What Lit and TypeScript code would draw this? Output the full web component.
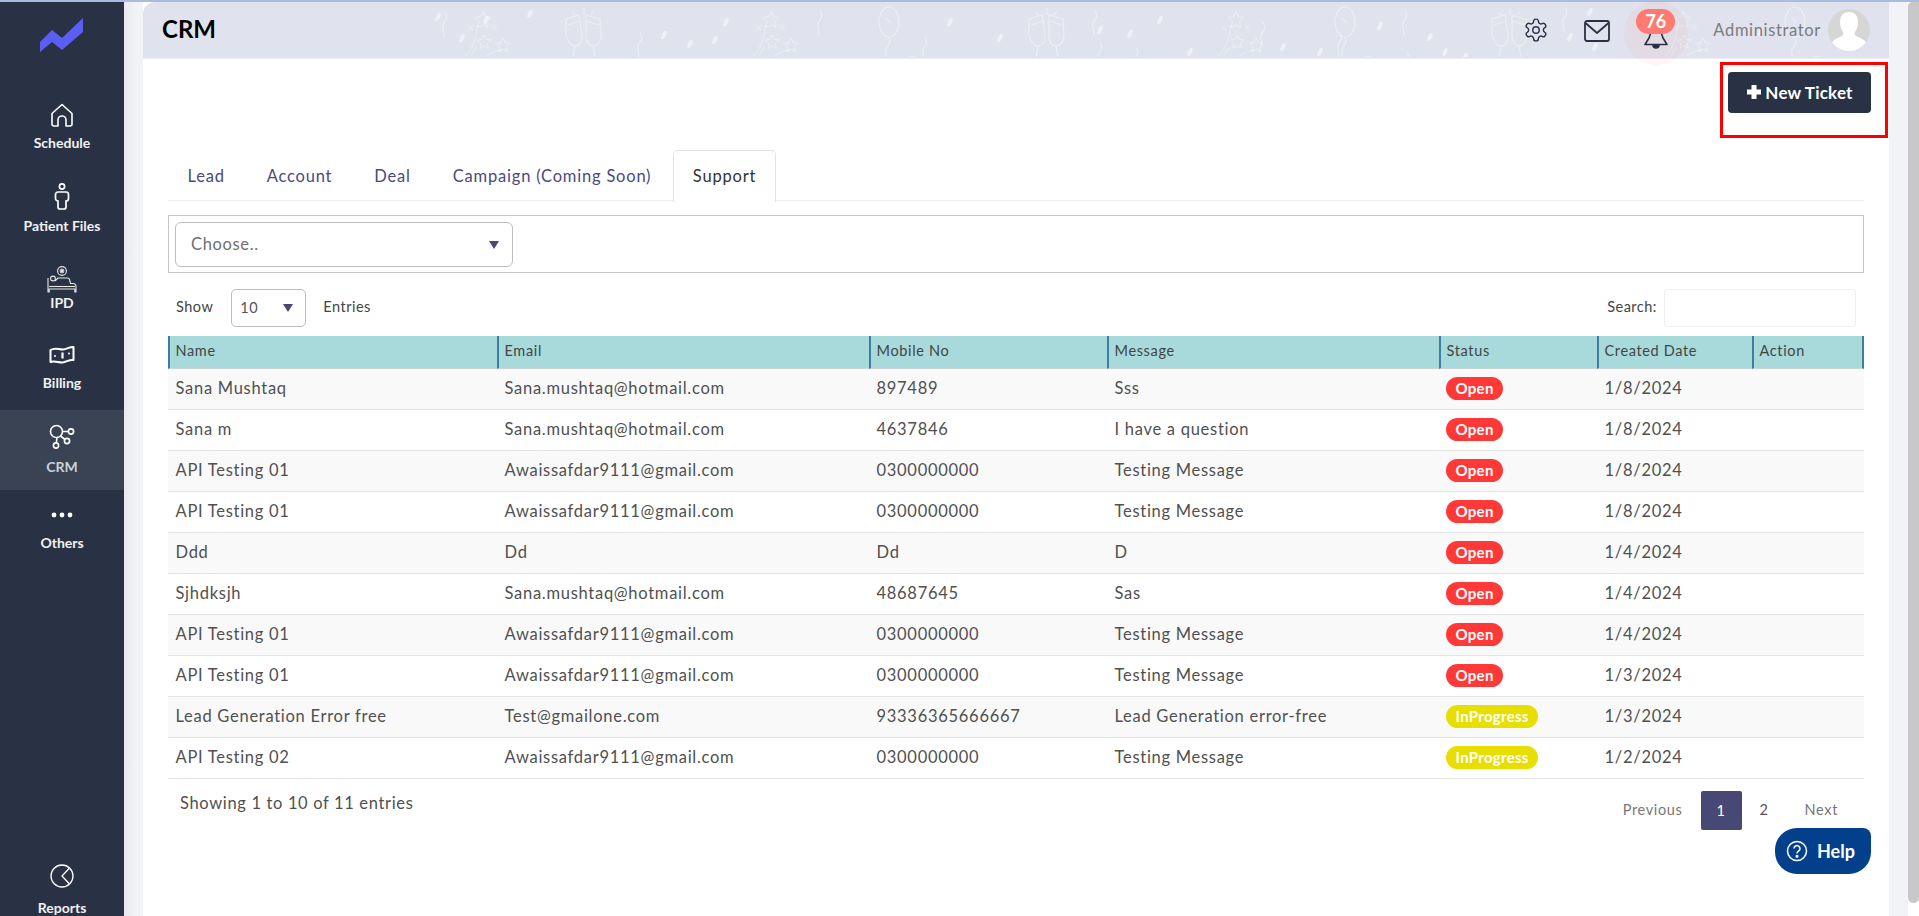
import { LitElement, html, css, svg } from "lit";
import { customElement } from "lit/decorators.js";

const rows = [
  ["Sana Mushtaq", "Sana.mushtaq@hotmail.com", "897489", "Sss", "Open", "1/8/2024"],
  ["Sana m", "Sana.mushtaq@hotmail.com", "4637846", "I have a question", "Open", "1/8/2024"],
  ["API Testing 01", "Awaissafdar9111@gmail.com", "0300000000", "Testing Message", "Open", "1/8/2024"],
  ["API Testing 01", "Awaissafdar9111@gmail.com", "0300000000", "Testing Message", "Open", "1/8/2024"],
  ["Ddd", "Dd", "Dd", "D", "Open", "1/4/2024"],
  ["Sjhdksjh", "Sana.mushtaq@hotmail.com", "48687645", "Sas", "Open", "1/4/2024"],
  ["API Testing 01", "Awaissafdar9111@gmail.com", "0300000000", "Testing Message", "Open", "1/4/2024"],
  ["API Testing 01", "Awaissafdar9111@gmail.com", "0300000000", "Testing Message", "Open", "1/3/2024"],
  ["Lead Generation Error free", "Test@gmailone.com", "93336365666667", "Lead Generation error-free", "InProgress", "1/3/2024"],
  ["API Testing 02", "Awaissafdar9111@gmail.com", "0300000000", "Testing Message", "InProgress", "1/2/2024"],
];
const heads = ["Name", "Email", "Mobile No", "Message", "Status", "Created Date", "Action"];
const cols = [329, 372, 238, 332, 158, 155, 112];

const navIcons: Record<string, unknown> = {
  Schedule: html`<svg width="26" height="26" viewBox="0 0 26 26" fill="none" stroke="#fff" stroke-width="1.6" stroke-linejoin="round"><path d="M3 11.5 13 2.5l10 9v10.5a2 2 0 0 1-2 2h-4v-6a4 4 0 0 0-8 0v6H5a2 2 0 0 1-2-2z"/></svg>`,
  "Patient Files": html`<svg width="16" height="28" viewBox="0 0 16 28" fill="none" stroke="#fff" stroke-width="1.7"><circle cx="8" cy="3.5" r="2.6"/><path d="M4 9h8a2.5 2.5 0 0 1 2.5 2.5v4a2.5 2.5 0 0 1-2.5 2.5v6a2 2 0 0 1-2 2H6a2 2 0 0 1-2-2v-6a2.5 2.5 0 0 1-2.5-2.5v-4A2.5 2.5 0 0 1 4 9z"/></svg>`,
  IPD: html`<svg width="30" height="28" viewBox="0 0 30 28" fill="none" stroke="#e6e6e6" stroke-width="1.1" stroke-linejoin="round"><circle cx="15" cy="5" r="4.4"/><path d="M12.6 5h4.8M15 2.6v4.8M13.3 3.3l3.4 3.4M16.7 3.3l-3.4 3.4"/><path d="M1 12v14h1.2v-3h25.6v3H29v-6a3 3 0 0 0-3-2.5h-2.5l-1-4a2 2 0 0 0-2-1.5H11l-3 3"/><path d="M2.2 20.5H28"/><circle cx="6" cy="12.5" r="2.4"/></svg>`,
  Billing: html`<svg width="26" height="20" viewBox="0 0 26 20" fill="none" stroke="#fff" stroke-width="2" stroke-linejoin="round"><path d="M1.5 5c5-3.2 8.5-.2 12.5-.5 4-.3 7-3 10.500-2.500v13c-4-.8-7 2-11 2.500-4 .4-7-2-12-.5z"/><path d="M13.500 7.500v6" stroke-width="2.200"/><circle cx="6" cy="11" r="1" fill="#fff" stroke="none"/><circle cx="20" cy="8.500" r="1" fill="#fff" stroke="none"/></svg>`,
  CRM: html`<svg width="26" height="26" viewBox="0 0 26 26" fill="none" stroke="#fff" stroke-width="1.600"><circle cx="7.500" cy="7.500" r="6"/><circle cx="22" cy="7.500" r="2.600"/><circle cx="18" cy="17" r="2.600"/><circle cx="7" cy="21.500" r="2.600"/><path d="M13.500 7.500h6M11.500 12l4.500 3.500M8 13.500l-.7 5.500"/></svg>`,
  Others: html`<svg width="24" height="8" viewBox="0 0 24 8" fill="#fff"><circle cx="4" cy="4" r="2.400"/><circle cx="12" cy="4" r="2.400"/><circle cx="20" cy="4" r="2.400"/></svg>`,
  Reports: html`<svg width="24" height="24" viewBox="0 0 24 24" fill="none" stroke="#fff" stroke-width="1.300"><circle cx="12" cy="12" r="11"/><path d="M19.500 4 12 12l7.500 8"/></svg>`,
};

const nav = [
  { name: "Schedule", pad: 12, gap: 7, active: false },
  { name: "Patient Files", pad: 13, gap: 7, active: false },
  { name: "IPD", pad: 16, gap: 1, active: false },
  { name: "Billing", pad: 15, gap: 10, active: false },
  { name: "CRM", pad: 14, gap: 9, active: true },
  { name: "Others", pad: 21, gap: 16, active: false },
];

const glasses = svg`<symbol id="gl" viewBox="0 0 44 50" overflow="visible"><path d="M4 8l13-4 3 20c.5 7-3 11-7 11s-8-5-9-11zM6 14l12-4M24 4l14 4 1 16c0 7-4 11-8 11s-7-4-7-11zM24 10l13 4M13 35l-2 11M6 47l10 1M31 35l2 11M28 48l10-1M11 1l2 4M22-3v7M32 0l-3 4"/></symbol>`;
const fireworks = svg`<symbol id="fw" viewBox="0 0 60 60" overflow="visible"><path d="M22 2l3 6 6 1-5 5 1 7-5-3-6 3 1-7-5-5 7-1zM23 30l2 5 6 1-4 4 1 6-5-3-5 3 1-6-4-4 5-1zM46 34l2 5 6 1-4 4 1 6-5-3-5 3 1-6-4-4 5-1zM4 18l6 6M10 18l-6 6M32 18l6 6M38 18l-6 6M15 18C14 35 8 48 0 56M14 44L3 60M44 48C30 50 20 58 12 70M32 62l5 5M37 62l-5 5"/></symbol>`;
const balloon = svg`<symbol id="bl" viewBox="0 0 40 70" overflow="visible"><ellipse cx="12" cy="14" rx="10" ry="15"/><path d="M12 29c2 4 1 7-2 11-3 3 0 9 0 15M8 10c2 0 4 3 5 5M35 48a8 11 0 1 0 .1 0z"/></symbol>`;
const conf = [[438, 15], [462, 36], [486, 18], [530, 12], [664, 33], [690, 42], [715, 38], [726, 20], [950, 20], [1000, 36], [990, 60], [1160, 18], [1100, 28], [1130, 32], [1190, 50], [1283, 45], [1320, 50], [1380, 24], [1430, 35], [1445, 50], [1465, 55], [1590, 10], [1570, 35], [1595, 45], [1760, 30]];
const squig = [[445, 10], [640, 30], [820, 8], [925, 35], [1100, 40], [1095, 8], [1136, 45], [1263, 20], [1340, 30], [1405, 8], [1407, 50], [1565, 5]];

@customElement("app-root")
export class AppRoot extends LitElement {
  static styles = css`
    :host { display: block; position: relative; width: 1919px; height: 916px; overflow: hidden; font-family: "Lato", "Noto Sans", sans-serif; color: #444; background: #fff; letter-spacing: .65px; }
    * { box-sizing: border-box; }
    .topline { height: 2px; background: #a9bbdf; }
    .layout { display: flex; height: 914px; }
    .side { width: 124px; flex: none; background: #293145; display: flex; flex-direction: column; color: #f2f2f2; }
    .logo { height: 88px; padding: 16px 0 0 40px; flex: none; }
    .logo svg { display: block; }
    .nav { height: 80px; flex: none; display: flex; flex-direction: column; align-items: center; font-size: 14px; font-weight: 700; letter-spacing: 0; line-height: 16px; }
    .nav.active { background: #3a4354; color: #ccd0d6; }
    .nav svg { display: block; }
    .reports { margin-top: 294px; gap: 12px; }
    .main { flex: 1; min-width: 0; background: linear-gradient(90deg, #e9eaed 0, #f2f3f6 12px); padding: 0 19px; }
    .panel { height: 100%; background: #fff; display: flex; flex-direction: column; }
    .scroll { width: 11px; flex: none; background: #fff; }
    .thumb { height: 901px; background: #c8c8c8; border-radius: 5px 0 6px 6px; }
    .head { height: 57px; flex: none; background: #e0e3ed; border-bottom: 1px solid #eceef4; border-top-left-radius: 12px; display: flex; align-items: center; padding: 0 19px 1px; position: relative; }
    .confetti { position: absolute; left: 0; top: 0; width: 100%; height: 55px; pointer-events: none; }
    .head h1 { margin: 0 0 2px; font-size: 24px; font-weight: 700; color: #000; position: relative; letter-spacing: 0; }
    .tools { margin-left: auto; display: flex; align-items: center; position: relative; }
    .gear { display: block; margin-right: 35px; }
    .mail { display: block; margin-right: 26px; margin-top: 2px; }
    .bellwrap { width: 40px; height: 46px; margin-right: 37px; position: relative; display: flex; justify-content: center; }
    .halo { position: absolute; left: -12px; top: -6px; width: 64px; height: 64px; border-radius: 50%; background: rgba(255, 120, 110, .07); }
    .bell { position: absolute; top: 24px; left: 8px; }
    .count { position: absolute; left: 0; top: 2px; width: 39px; height: 25px; border-radius: 13px; background: #ff7a70; color: #fff; font-size: 18px; font-weight: 700; text-align: center; line-height: 25px; letter-spacing: 0; }
    .admin { font-size: 16.500px; color: #7b7b80; }
    .avatar { width: 42px; height: 42px; border-radius: 50%; background: #d6d6d6; margin-left: 7px; overflow: hidden; }
    .avatar svg { display: block; }
    .body { flex: 1; padding: 13px 25px 0; display: flex; flex-direction: column; }
    .btnrow { display: flex; justify-content: flex-end; margin-right: -7px; }
    .btn { height: 41px; width: 143px; border-radius: 4px; background: #293145; color: #fff; font-size: 17px; font-weight: 700; display: flex; align-items: center; justify-content: center; gap: 3px; letter-spacing: .2px; padding-bottom: 1px; }
    .tabs { margin-top: 37px; display: flex; height: 51px; border-bottom: 1px solid #eceef2; }
    .tab { padding: 0 20.500px 1px; border: 1px solid transparent; border-bottom: 0; font-size: 16.500px; letter-spacing: .8px; color: #4a4a7c; display: flex; align-items: center; height: 51px; margin-left: -1px; }
    .tab:first-child { margin-left: -2px; }
    .tab.on { color: #333; background: #fff; border-color: #e2e3e8; border-radius: 5px 5px 0 0; height: 52px; padding: 0 19px 1px; margin-left: 0; }
    .filter { margin-top: 14px; height: 58px; border: 1px solid #c6c6c6; padding: 6px; }
    .select { position: relative; border: 1px solid #bdbdbd; border-radius: 6px; width: 338px; height: 45px; display: flex; align-items: center; padding: 0 0 2px 15px; color: #6f6f6f; font-size: 16.500px; }
    .tri { position: absolute; width: 0; height: 0; border-left: 5.500px solid transparent; border-right: 5.500px solid transparent; border-top: 8px solid #484875; }
    .select .tri { right: 13px; top: 18px; }
    .ctrls { margin-top: 16px; height: 38px; display: flex; align-items: center; font-size: 14.500px; letter-spacing: .5px; color: #444; padding: 0 8px; }
    .ctrls span { padding-bottom: 3px; }
    .ctrls .tri { padding: 0; }
    .small { position: relative; width: 75px; height: 38px; border: 1px solid #bdbdbd; border-radius: 5px; margin: 0 17px 0 18px; display: flex; align-items: center; padding: 0 0 2px 8px; color: #555; }
    .small .tri { right: 12px; top: 14px; }
    .searchlabel { margin-left: auto; margin-right: 7px; }
    .input { width: 192px; height: 38px; border: 1px solid #eee; border-radius: 3px; }
    table { margin-top: 9px; width: 1696px; border-collapse: separate; border-spacing: 0; table-layout: fixed; }
    th { height: 33px; background: #a8dadb; border-left: 2px solid #3f7ea3; padding: 0 0 3px 5.500px; text-align: left; font-size: 14.500px; font-weight: 400; color: #444; border-bottom: 1px solid #c9d4d4; }
    th:last-child { border-right: 2px solid #3f7ea3; }
    td { height: 41px; padding: 0 0 3px 7.500px; font-size: 16.500px; letter-spacing: .72px; color: #505050; border-bottom: 1px solid #e4e4e4; white-space: nowrap; }
    tr:nth-child(odd) td { background: #f9f9f9; }
    .badge { display: inline-block; height: 23px; line-height: 23px; padding: 0 9.500px; border-radius: 12px; color: #fff; font-size: 15px; font-weight: 700; letter-spacing: .3px; vertical-align: middle; margin: 2px 0 0 -.5px; }
    .Open { background: #ff3838; }
    .InProgress { background: #e8de00; }
    .foot { display: flex; justify-content: space-between; }
    .info { font-size: 16.500px; margin: 12px 0 0 12px; color: #505050; line-height: 24px; }
    .pager { display: flex; align-items: center; font-size: 14.500px; margin: 12px 8px 0 0; height: 39px; color: #555; }
    .pg { padding: 0 18px 2px; }
    .prev { color: #777; }
    .cur { width: 41px; height: 39px; padding: 0; background: #484875; color: #fff; border-radius: 2px; display: flex; align-items: center; justify-content: center; }
    .help { position: absolute; left: 1775px; top: 828px; width: 96px; height: 46px; background: #03408b; border-radius: 22px 8px 22px 22px; color: #fff; font-size: 18px; font-weight: 700; display: flex; align-items: center; padding: 0 0 1px 11px; gap: 9px; letter-spacing: 0; }
    .help svg { display: block; }
    .redbox { position: absolute; left: 1720px; top: 62px; width: 168px; height: 76px; border: 3px solid #f00; pointer-events: none; }
  `;

  render() {
    return html`
      <div class="topline"></div>
      <div class="layout">
        <aside class="side">
          <div class="logo"><svg width="43" height="34" viewBox="0 0 43 34"><path fill="#5a5ef2" d="M0 24 12 12l10 8L43 0v14L22 32l-10-8L0 34z"/></svg></div>
          ${nav.map((n) => html`<div class="nav ${n.active ? "active" : ""}" style="padding-top:${n.pad}px;gap:${n.gap}px">${navIcons[n.name]}<span>${n.name}</span></div>`)}
          <div class="nav reports">${navIcons.Reports}<span>Reports</span></div>
        </aside>
        <div class="main">
          <div class="panel">
            <header class="head">
              <svg class="confetti" viewBox="0 0 1746 55" fill="none" stroke="#fff" stroke-opacity=".38" stroke-width="1.200">
                <defs>${glasses}${fireworks}${balloon}</defs>
                ${[419, 882, 1345].map((x) => svg`<use href="#gl" x="${x}" y="9" width="44" height="50"/>`)}
                ${[322, 610, 1075, 1522].map((x) => svg`<use href="#fw" x="${x}" y="8" width="50" height="50"/>`)}
                ${[734, 1190, 1640].map((x) => svg`<use href="#bl" x="${x}" y="6" width="40" height="70"/>`)}
                ${conf.map(([x, y]) => svg`<ellipse cx="${x - 143}" cy="${y}" rx="2" ry="4.500" fill="#fff" fill-opacity=".5" stroke="none" transform="rotate(25 ${x - 143} ${y})"/>`)}
                ${squig.map(([x, y]) => svg`<path d="M${x - 143} ${y}c3 5 2 8-1 11-3 3 0 9 0 14"/>`)}
              </svg>
              <h1>CRM</h1>
              <div class="tools">
                <svg class="gear" width="26" height="26" viewBox="0 0 24 24" fill="none" stroke="#293145" stroke-width="1.300" stroke-linejoin="round"><path d="M12.220 2h-.44a2 2 0 0 0-2 2v.18a2 2 0 0 1-1 1.730l-.43.25a2 2 0 0 1-2 0l-.15-.08a2 2 0 0 0-2.730.73l-.22.38a2 2 0 0 0 .73 2.730l.15.1a2 2 0 0 1 1 1.720v.51a2 2 0 0 1-1 1.740l-.15.09a2 2 0 0 0-.73 2.730l.22.38a2 2 0 0 0 2.730.73l.15-.08a2 2 0 0 1 2 0l.43.25a2 2 0 0 1 1 1.730V20a2 2 0 0 0 2 2h.44a2 2 0 0 0 2-2v-.18a2 2 0 0 1 1-1.730l.43-.25a2 2 0 0 1 2 0l.15.08a2 2 0 0 0 2.730-.73l.22-.39a2 2 0 0 0-.73-2.730l-.15-.08a2 2 0 0 1-1-1.740v-.5a2 2 0 0 1 1-1.740l.15-.09a2 2 0 0 0 .73-2.730l-.22-.38a2 2 0 0 0-2.730-.73l-.15.08a2 2 0 0 1-2 0l-.43-.25a2 2 0 0 1-1-1.730V4a2 2 0 0 0-2-2z"/><circle cx="12" cy="12" r="3"/></svg>
                <svg class="mail" width="26" height="22" viewBox="0 0 26 22" fill="none" stroke="#293145" stroke-width="1.800" stroke-linejoin="round"><rect x="1" y="1" width="24" height="20" rx="2"/><path d="M1.500 3 13 13 24.500 3"/></svg>
                <div class="bellwrap">
                  <div class="halo"></div>
                  <svg class="bell" width="24" height="20" viewBox="0 0 24 20" fill="none" stroke="#293145" stroke-width="1.600" stroke-linejoin="round"><path d="M7 1 L5 7 L1 13.500 H23 L19 7 L17 1"/><path d="M9 14a3 3 0 0 0 6 0z" fill="#293145"/></svg>
                  <div class="count">76</div>
                </div>
                <span class="admin">Administrator</span>
                <div class="avatar"><svg width="42" height="42" viewBox="0 0 42 42"><path fill="#fff" d="M21 3c6 0 9 4 9 10 0 4-1 7-3 10-1 2 0 4 3 5 5 2 8 4 9 8v6H3v-6c1-4 4-6 9-8 3-1 4-3 3-5-2-3-3-6-3-10 0-6 3-10 9-10z"/></svg></div>
              </div>
            </header>
            <div class="body">
              <div class="btnrow"><div class="btn"><svg width="16" height="16" viewBox="0 0 16 16" fill="#fff"><path d="M5.500 1h5v4.500H15v5h-4.500V15h-5v-4.500H1v-5h4.500z"/></svg><span>New Ticket</span></div></div>
              <div class="tabs">
                <div class="tab">Lead</div>
                <div class="tab">Account</div>
                <div class="tab">Deal</div>
                <div class="tab">Campaign (Coming Soon)</div>
                <div class="tab on">Support</div>
              </div>
              <div class="filter"><div class="select">Choose..<span class="tri"></span></div></div>
              <div class="ctrls">
                <span>Show</span>
                <div class="small">10<span class="tri"></span></div>
                <span>Entries</span>
                <span class="searchlabel">Search:</span>
                <div class="input"></div>
              </div>
              <table>
                <colgroup>${cols.map((w) => html`<col style="width:${w}px" />`)}</colgroup>
                <thead><tr>${heads.map((h) => html`<th>${h}</th>`)}</tr></thead>
                <tbody>
                  ${rows.map((r) => html`<tr>
                    <td>${r[0]}</td><td>${r[1]}</td><td>${r[2]}</td><td>${r[3]}</td>
                    <td><span class="badge ${r[4]}">${r[4]}</span></td><td>${r[5]}</td><td></td>
                  </tr>`)}
                </tbody>
              </table>
              <div class="foot">
                <div class="info">Showing 1 to 10 of 11 entries</div>
                <div class="pager">
                  <span class="pg prev">Previous</span>
                  <span class="pg cur">1</span>
                  <span class="pg">2</span>
                  <span class="pg prev">Next</span>
                </div>
              </div>
            </div>
          </div>
        </div>
        <div class="scroll"><div class="thumb"></div></div>
      </div>
      <div class="redbox"></div>
      <div class="help"><svg width="22" height="22" viewBox="0 0 22 22" fill="none" stroke="#fff" stroke-width="1.500"><circle cx="11" cy="11" r="9.500"/><path d="M8 8.500a3 3 0 1 1 4.500 2.700c-1 .6-1.500 1.200-1.500 2.300"/><circle cx="11" cy="16.200" r=".8" fill="#fff"/></svg><span>Help</span></div>
    `;
  }
}
